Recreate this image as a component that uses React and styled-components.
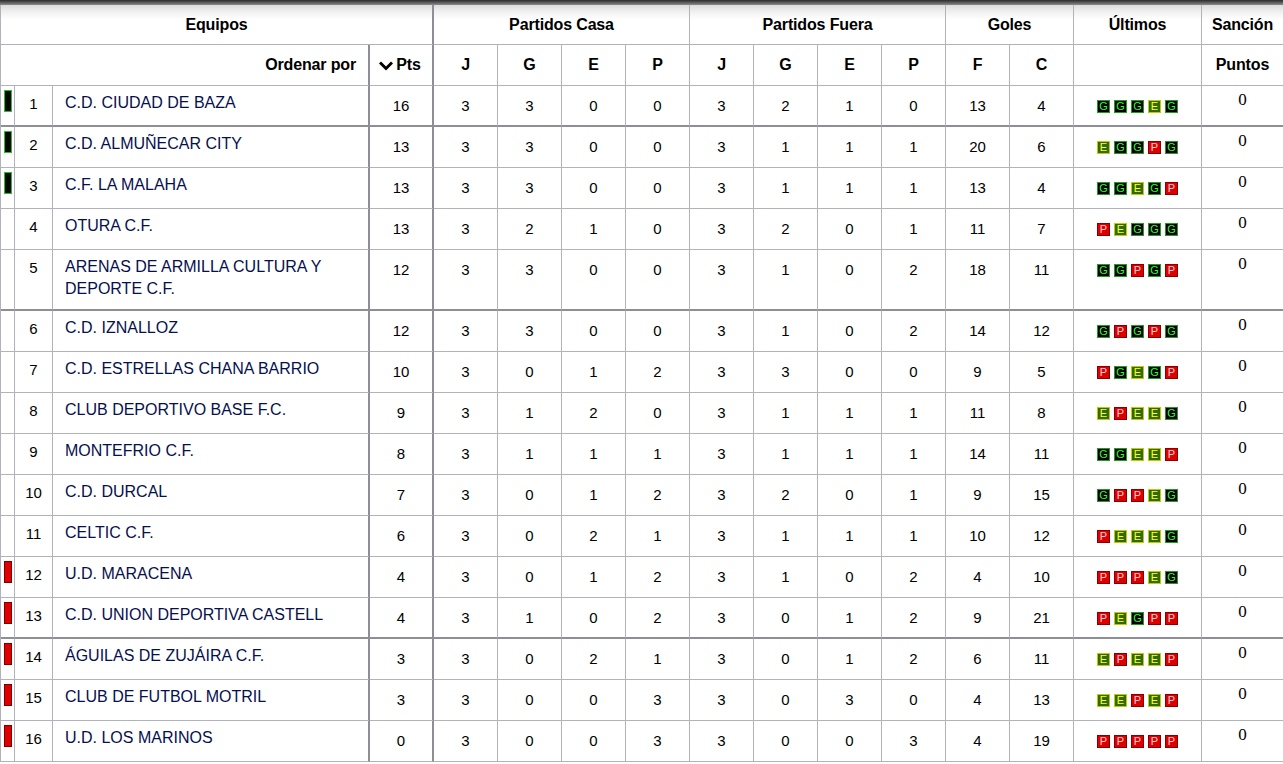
import React from "react";
import styled, { createGlobalStyle, css } from "styled-components";

const GlobalStyle = createGlobalStyle`
  body {
    margin: 0;
    background: #ffffff;
    font-family: "Liberation Sans", Arial, sans-serif;
    overflow: hidden;
  }
`;

const LINE = "#b2b2ba";
const HEAVY = "#8e8e96";

const TopShade = styled.div`
  height: 5px;
  background: linear-gradient(to bottom, #2c2c2c 0%, #5a5a5a 50%, #8c8c8c 100%);
`;

const Table = styled.div`
  display: grid;
  grid-template-columns: 14px 38px 317px 64px repeat(8, 64px) 64px 64px 128px 81px;
  grid-template-rows: 40px 41px;
  grid-auto-rows: minmax(41px, auto);
  width: 1283px;
  box-sizing: border-box;
  border-left: 1px solid ${LINE};
`;

const Row = styled.div`
  display: contents;

  & > * {
    border-bottom: ${(props) => (props.heavy ? `2px solid ${HEAVY}` : `1px solid ${LINE}`)};
  }
`;

const Cell = styled.div`
  box-sizing: border-box;
  display: flex;
  justify-content: center;
  align-items: flex-start;
  border-right: 1px solid ${LINE};
  line-height: 22px;
  font-size: 15px;
  color: #000000;
  padding-top: 9px;
  ${(props) => props.span && css`grid-column: span ${props.span};`}
  ${(props) => props.thick && css`border-right: 2px solid ${HEAVY};`}
  ${(props) => props.plain && css`border-right: none;`}
`;

const HeadCell = styled(Cell)`
  align-items: center;
  padding-top: 0;
  font-size: 16px;
  font-weight: bold;
  color: #000000;
  letter-spacing: -0.15px;
  background: ${(props) =>
    props.top
      ? "linear-gradient(to bottom, #dcdcdc 0px, #ececec 5px, #f7f7f7 10px, #ffffff 15px)"
      : "#ffffff"};
`;

const SortCell = styled(HeadCell)`
  justify-content: flex-end;
  padding-right: 12px;
`;

const PtsHead = styled(HeadCell)`
  gap: 3px;
  padding-right: 2px;

  svg {
    display: block;
    margin-top: 1px;
  }
`;

const BarCell = styled(Cell)`
  justify-content: flex-start;
  padding: 4px 0 0 3px;
`;

const Bar = styled.div`
  width: 6px;
  height: 20px;
  border: 1px solid ${(props) => (props.kind === "up" ? "#22c322" : "#7a0000")};
  background: ${(props) => (props.kind === "up" ? "#050505" : "#e00000")};
`;

const PosCell = styled(Cell)`
  padding-top: 7px;
`;

const NameCell = styled(Cell)`
  justify-content: flex-start;
  padding: 6px 10px 9px 12px;
  font-size: 16px;
  color: #06104f;
`;

const FormCell = styled(Cell)`
  padding-top: 14px;
  gap: 4px;
`;

const Badge = styled.span`
  box-sizing: border-box;
  width: 13px;
  height: 13px;
  display: flex;
  align-items: center;
  justify-content: center;
  font-size: 11px;
  line-height: 1;
  font-family: "Liberation Sans", Arial, sans-serif;
  ${(props) =>
    props.r === "G" &&
    css`
      background: #000000;
      color: #2cff2c;
      border: 1px solid #1f9d1f;
    `}
  ${(props) =>
    props.r === "E" &&
    css`
      background: #2f6b00;
      color: #ffff33;
      border: 1px solid #c8c800;
    `}
  ${(props) =>
    props.r === "P" &&
    css`
      background: #dd0000;
      color: #ffd0d0;
      border: 1px solid #8a0000;
    `}
`;

const PenaltyCell = styled(Cell)`
  padding-top: 3px;
  font-family: "Liberation Serif", "Times New Roman", serif;
  font-size: 17px;
  color: #000000;
`;

const teams = [
  [1, "C.D. CIUDAD DE BAZA", 16, [3, 3, 0, 0], [3, 2, 1, 0], 13, 4, "GGGEG"],
  [2, "C.D. ALMUÑECAR CITY", 13, [3, 3, 0, 0], [3, 1, 1, 1], 20, 6, "EGGPG"],
  [3, "C.F. LA MALAHA", 13, [3, 3, 0, 0], [3, 1, 1, 1], 13, 4, "GGEGP"],
  [4, "OTURA C.F.", 13, [3, 2, 1, 0], [3, 2, 0, 1], 11, 7, "PEGGG"],
  [5, "ARENAS DE ARMILLA CULTURA Y DEPORTE C.F.", 12, [3, 3, 0, 0], [3, 1, 0, 2], 18, 11, "GGPGP"],
  [6, "C.D. IZNALLOZ", 12, [3, 3, 0, 0], [3, 1, 0, 2], 14, 12, "GPGPG"],
  [7, "C.D. ESTRELLAS CHANA BARRIO", 10, [3, 0, 1, 2], [3, 3, 0, 0], 9, 5, "PGEGP"],
  [8, "CLUB DEPORTIVO BASE F.C.", 9, [3, 1, 2, 0], [3, 1, 1, 1], 11, 8, "EPEEG"],
  [9, "MONTEFRIO C.F.", 8, [3, 1, 1, 1], [3, 1, 1, 1], 14, 11, "GGEEP"],
  [10, "C.D. DURCAL", 7, [3, 0, 1, 2], [3, 2, 0, 1], 9, 15, "GPPEG"],
  [11, "CELTIC C.F.", 6, [3, 0, 2, 1], [3, 1, 1, 1], 10, 12, "PEEEG"],
  [12, "U.D. MARACENA", 4, [3, 0, 1, 2], [3, 1, 0, 2], 4, 10, "PPPEG"],
  [13, "C.D. UNION DEPORTIVA CASTELL", 4, [3, 1, 0, 2], [3, 0, 1, 2], 9, 21, "PEGPP"],
  [14, "ÁGUILAS DE ZUJÁIRA C.F.", 3, [3, 0, 2, 1], [3, 0, 1, 2], 6, 11, "EPEEP"],
  [15, "CLUB DE FUTBOL MOTRIL", 3, [3, 0, 0, 3], [3, 0, 3, 0], 4, 13, "EEPEP"],
  [16, "U.D. LOS MARINOS", 0, [3, 0, 0, 3], [3, 0, 0, 3], 4, 19, "PPPPP"],
];

const heavyRows = [1, 5, 13];

const zoneOf = (pos) => (pos <= 3 ? "up" : pos >= 12 ? "down" : null);

const SortIcon = () => (
  <svg width="14" height="10" viewBox="0 0 14 10">
    <polyline
      points="2,2.5 7,7.5 12,2.5"
      fill="none"
      stroke="#000"
      strokeWidth="3"
      strokeLinecap="square"
    />
  </svg>
);

const App = () => {
  return (
    <>
      <GlobalStyle />
      <TopShade />
      <Table>
        <Row>
          <HeadCell top span={4} thick>Equipos</HeadCell>
          <HeadCell top span={4}>Partidos Casa</HeadCell>
          <HeadCell top span={4}>Partidos Fuera</HeadCell>
          <HeadCell top span={2}>Goles</HeadCell>
          <HeadCell top>Últimos</HeadCell>
          <HeadCell top plain>Sanción</HeadCell>
        </Row>
        <Row>
          <SortCell span={3} thick>Ordenar por</SortCell>
          <PtsHead thick>
            <SortIcon />
            Pts
          </PtsHead>
          {["J", "G", "E", "P", "J", "G", "E", "P", "F", "C"].map((h, i) => (
            <HeadCell key={i}>{h}</HeadCell>
          ))}
          <HeadCell />
          <HeadCell plain>Puntos</HeadCell>
        </Row>
        {teams.map(([pos, name, pts, home, away, gf, ga, form]) => (
          <Row key={pos} heavy={heavyRows.includes(pos)}>
            <BarCell>{zoneOf(pos) && <Bar kind={zoneOf(pos)} />}</BarCell>
            <PosCell>{pos}</PosCell>
            <NameCell thick>{name}</NameCell>
            <Cell thick>{pts}</Cell>
            {[...home, ...away].map((v, i) => (
              <Cell key={i}>{v}</Cell>
            ))}
            <Cell>{gf}</Cell>
            <Cell>{ga}</Cell>
            <FormCell>
              {form.split("").map((r, i) => (
                <Badge key={i} r={r}>
                  {r}
                </Badge>
              ))}
            </FormCell>
            <PenaltyCell plain>0</PenaltyCell>
          </Row>
        ))}
      </Table>
    </>
  );
};

export default App;
